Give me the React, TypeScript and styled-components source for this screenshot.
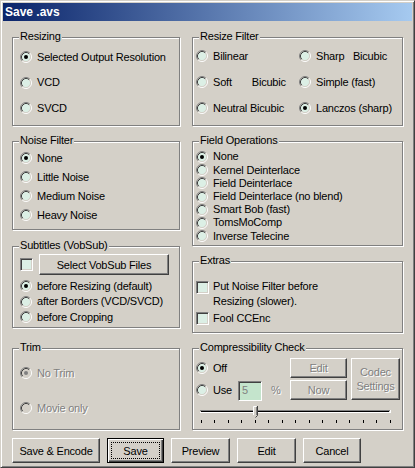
import React from "react";
import styled, { createGlobalStyle, css } from "styled-components";

const GlobalStyle = createGlobalStyle`
	html, body {
		margin: 0;
		padding: 0;
		background: #d4d0c8;
	}
	* {
		box-sizing: border-box;
	}
`;

const uiFont = css`
	font-family: "Liberation Sans", Arial, sans-serif;
	font-size: 11px;
	letter-spacing: -0.2px;
	color: #000;
`;

const Window = styled.div`
	width: 415px;
	height: 468px;
	background: #d4d0c8;
	border: 1px solid;
	border-color: #d4d0c8 #404040 #404040 #d4d0c8;
	box-shadow: inset 1px 1px #fff, inset -1px -1px #808080;
	padding: 2px;
	${uiFont};
`;

const TitleBar = styled.div`
	height: 18px;
	display: flex;
	align-items: center;
	padding-left: 2px;
	background: linear-gradient(to right, #0a246a, #a6caf0);
	color: #fff;
	font-family: "Liberation Sans", Arial, sans-serif;
	font-weight: bold;
	font-size: 12px;
	letter-spacing: 0;
`;

const Body = styled.div`
	padding: 16px 0 0 9px;
`;

const Grid = styled.div`
	display: grid;
	grid-template-columns: 168px 211px;
	grid-template-rows: 89px 192px 82px;
	column-gap: 12px;
	row-gap: 15px;
`;

const Stack = styled.div<{ $gap: number }>`
	display: flex;
	flex-direction: column;
	gap: ${(p) => p.$gap}px;
`;

const Group = styled.div<{ $h?: number; $pt: number; $pl: number }>`
	position: relative;
	height: ${(p) => (p.$h ? `${p.$h}px` : "100%")};
	border: 1px solid #808080;
	box-shadow: inset 1px 1px 0 #fff, 1px 1px 0 #fff;
	padding: ${(p) => p.$pt}px 0 0 ${(p) => p.$pl}px;
`;

const Legend = styled.span`
	position: absolute;
	top: -8px;
	left: 6px;
	padding: 0 1px;
	line-height: 13px;
	background: #d4d0c8;
`;

const Rows = styled.div<{ $row: number }>`
	display: grid;
	grid-auto-rows: ${(p) => p.$row}px;
`;

const TwoCols = styled.div`
	display: grid;
	grid-template-columns: 103px 1fr;
	grid-auto-rows: 26px;
`;

const Option = styled.label<{ $disabled?: boolean }>`
	display: flex;
	align-items: center;
	gap: 5px;
	line-height: 13px;
	white-space: pre;
	${(p) =>
		p.$disabled &&
		css`
			color: #808080;
			text-shadow: 1px 1px 0 #fff;
		`}
`;

const RadioSvg = styled.svg`
	flex: none;
	display: block;
`;

const Radio = ({ checked, disabled }: { checked?: boolean; disabled?: boolean }) => (
	<RadioSvg width={12} height={12} viewBox="0 0 12 12">
		<circle cx="6" cy="6" r="4.5" fill={disabled ? "#d4d0c8" : "#dcefe5"} />
		<path d="M2.11 9.89 A5.5 5.5 0 0 1 9.89 2.11" fill="none" stroke="#808080" />
		<path d="M9.89 2.11 A5.5 5.5 0 0 1 2.11 9.89" fill="none" stroke="#fff" />
		<path d="M2.82 9.18 A4.5 4.5 0 0 1 9.18 2.82" fill="none" stroke="#404040" />
		<path d="M9.18 2.82 A4.5 4.5 0 0 1 2.82 9.18" fill="none" stroke="#d4d0c8" />
		{checked && <circle cx="6" cy="6" r="2" fill={disabled ? "#808080" : "#000"} />}
	</RadioSvg>
);

const Checkbox = styled.span<{ $mt?: number }>`
	flex: none;
	display: block;
	width: 13px;
	height: 13px;
	margin-top: ${(p) => p.$mt ?? 0}px;
	background: #dcefe5;
	border: 1px solid;
	border-color: #808080 #fff #fff #808080;
	box-shadow: inset 1px 1px #404040, inset -1px -1px #d4d0c8;
`;

const Button = styled.div<{ $w: number; $h?: number; $default?: boolean; $disabled?: boolean }>`
	position: relative;
	flex: none;
	width: ${(p) => p.$w}px;
	height: ${(p) => p.$h ?? 25}px;
	display: flex;
	align-items: center;
	justify-content: center;
	text-align: center;
	line-height: 14px;
	background: #d4d0c8;
	border: 1px solid;
	border-color: #fff #404040 #404040 #fff;
	box-shadow: inset -1px -1px #808080;
	${(p) =>
		p.$default &&
		css`
			border-color: #000;
			box-shadow: inset 1px 1px #fff, inset -1px -1px #404040, inset -2px -2px #808080;
			&::after {
				content: "";
				position: absolute;
				inset: 3px;
				border: 1px dotted #000;
			}
		`}
	${(p) =>
		p.$disabled &&
		css`
			color: #808080;
			text-shadow: 1px 1px 0 #fff;
		`}
`;

const SubRow = styled.div`
	display: flex;
	align-items: center;
	gap: 6px;
	height: 21px;
	margin-bottom: 3.25px;
`;

const CheckRow = styled.div<{ $mb?: number }>`
	display: flex;
	align-items: flex-start;
	gap: 4px;
	line-height: 15px;
	margin-bottom: ${(p) => p.$mb ?? 0}px;
`;

const TrimRows = styled.div`
	display: flex;
	flex-direction: column;
	gap: 15px;
	& > * {
		height: 20px;
	}
`;

const CompressGrid = styled.div`
	display: grid;
	grid-template-columns: 90px 57px 49px;
	grid-template-rows: 20px 20px;
	column-gap: 4px;
	row-gap: 2px;
`;

const CodecCell = styled.div`
	grid-column: 3;
	grid-row: 1 / span 2;
`;

const UseRow = styled.div`
	display: flex;
	align-items: center;
`;

const NumberBox = styled.span`
	width: 24px;
	height: 20px;
	margin: 1px 0 0 6px;
	padding: 2px 0 0 3px;
	background: #c4e4cc;
	color: #808080;
	border: 1px solid;
	border-color: #808080 #fff #fff #808080;
	box-shadow: inset 1px 1px #404040;
`;

const Percent = styled.span`
	margin-left: 9px;
	color: #808080;
	text-shadow: 1px 1px 0 #fff;
`;

const SliderSvg = styled.svg`
	display: block;
	margin: 4px 0 0 3px;
`;

const ButtonRow = styled.div`
	display: flex;
	gap: 7px;
	margin-top: 8px;
`;

const Slider = () => {
	const ticks = Array.from({ length: 15 }, (_, i) => 1.5 + i * 13.5);
	return (
		<SliderSvg width={194} height={20} viewBox="0 0 194 20">
			<line x1="1" y1="6.5" x2="191" y2="6.5" stroke="#808080" />
			<line x1="2" y1="7.5" x2="190" y2="7.5" stroke="#000" />
			<line x1="1" y1="8.5" x2="192" y2="8.5" stroke="#fff" />
			<line x1="191.5" y1="6" x2="191.5" y2="9" stroke="#fff" />
			{ticks.map((x) => (
				<line key={x} x1={Math.round(x) + 0.5} y1="16" x2={Math.round(x) + 0.5} y2="19" stroke="#000" />
			))}
			<path d="M54 2 H58 V11 L56 13 L54 11 Z" fill="#d4d0c8" />
			<path d="M54.5 11 V2.5 H57.5" fill="none" stroke="#fff" />
			<path d="M58.5 2 V11.5 L56.5 13.5" fill="none" stroke="#404040" />
			<path d="M57.5 3 V11" fill="none" stroke="#808080" />
		</SliderSvg>
	);
};

const App = () => {
	return (
		<>
			<GlobalStyle />
			<Window>
				<TitleBar>Save .avs</TitleBar>
				<Body>
					<Grid>
						<Group $h={89} $pt={6.5} $pl={7}>
							<Legend>Resizing</Legend>
							<Rows $row={25.5}>
								<Option><Radio checked />Selected Output Resolution</Option>
								<Option><Radio />VCD</Option>
								<Option><Radio />SVCD</Option>
							</Rows>
						</Group>

						<Group $h={89} $pt={5} $pl={3}>
							<Legend>Resize Filter</Legend>
							<TwoCols>
								<Option><Radio />Bilinear</Option>
								<Option><Radio />{"Sharp   Bicubic"}</Option>
								<Option><Radio />{"Soft       Bicubic"}</Option>
								<Option><Radio />Simple (fast)</Option>
								<Option><Radio />Neutral Bicubic</Option>
								<Option><Radio checked />Lanczos (sharp)</Option>
							</TwoCols>
						</Group>

						<Stack $gap={16}>
							<Group $h={89} $pt={6.5} $pl={7}>
								<Legend>Noise Filter</Legend>
								<Rows $row={19}>
									<Option><Radio checked />None</Option>
									<Option><Radio />Little Noise</Option>
									<Option><Radio />Medium Noise</Option>
									<Option><Radio />Heavy Noise</Option>
								</Rows>
							</Group>
							<Group $h={82} $pt={7} $pl={7}>
								<Legend>Subtitles (VobSub)</Legend>
								<SubRow>
									<Checkbox />
									<Button $w={130} $h={21}>Select VobSub Files</Button>
								</SubRow>
								<Rows $row={15.5}>
									<Option><Radio checked />before Resizing (default)</Option>
									<Option><Radio />after Borders (VCD/SVCD)</Option>
									<Option><Radio />before Cropping</Option>
								</Rows>
							</Group>
						</Stack>

						<Stack $gap={15}>
							<Group $h={105} $pt={8.4} $pl={3}>
								<Legend>Field Operations</Legend>
								<Rows $row={13.2}>
									<Option><Radio checked />None</Option>
									<Option><Radio />Kernel Deinterlace</Option>
									<Option><Radio />Field Deinterlace</Option>
									<Option><Radio />Field Deinterlace (no blend)</Option>
									<Option><Radio />Smart Bob (fast)</Option>
									<Option><Radio />TomsMoComp</Option>
									<Option><Radio />Inverse Telecine</Option>
								</Rows>
							</Group>
							<Group $h={72} $pt={16.5} $pl={3}>
								<Legend>Extras</Legend>
								<CheckRow $mb={2}>
									<Checkbox $mt={2.5} />
									<span>
										Put Noise Filter before
										<br />
										Resizing (slower).
									</span>
								</CheckRow>
								<CheckRow>
									<Checkbox $mt={1.5} />
									<span>Fool CCEnc</span>
								</CheckRow>
							</Group>
						</Stack>

						<Group $h={82} $pt={14} $pl={7}>
							<Legend>Trim</Legend>
							<TrimRows>
								<Option $disabled><Radio checked disabled />No Trim</Option>
								<Option $disabled><Radio disabled />Movie only</Option>
							</TrimRows>
						</Group>

						<Group $h={82} $pt={9} $pl={3}>
							<Legend>Compressibility Check</Legend>
							<CompressGrid>
								<Option><Radio checked />Off</Option>
								<Button $w={57} $h={20} $disabled>Edit</Button>
								<CodecCell>
									<Button $w={49} $h={42} $disabled>
										Codec
										<br />
										Settings
									</Button>
								</CodecCell>
								<UseRow>
									<Option><Radio />Use</Option>
									<NumberBox>5</NumberBox>
									<Percent>%</Percent>
								</UseRow>
								<Button $w={57} $h={20} $disabled>Now</Button>
							</CompressGrid>
							<Slider />
						</Group>
					</Grid>

					<ButtonRow>
						<Button $w={88}>Save &amp; Encode</Button>
						<Button $w={57} $default>Save</Button>
						<Button $w={59}>Preview</Button>
						<Button $w={59}>Edit</Button>
						<Button $w={58}>Cancel</Button>
					</ButtonRow>
				</Body>
			</Window>
		</>
	);
};

export default App;
